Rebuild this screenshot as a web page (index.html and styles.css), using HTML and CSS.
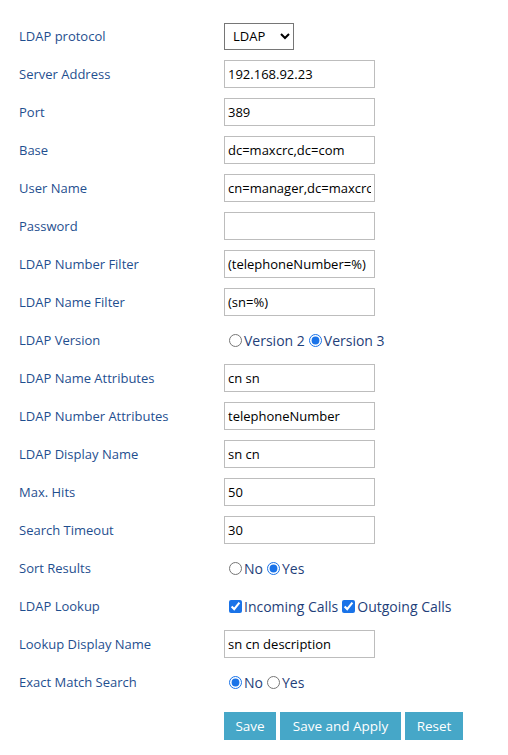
FILE: index.html
```html
<!DOCTYPE html>
<html>
<head>
<meta charset="utf-8">
<link rel="stylesheet" href="styles.css">
</head>
<body>
<form class="form">
  <div class="row"><label class="lbl">LDAP protocol</label><div class="ctl"><select class="sel"><option>LDAP</option></select></div></div>
  <div class="row"><label class="lbl">Server Address</label><div class="ctl"><input class="txt" value="192.168.92.23"></div></div>
  <div class="row"><label class="lbl">Port</label><div class="ctl"><input class="txt" value="389"></div></div>
  <div class="row"><label class="lbl">Base</label><div class="ctl"><input class="txt" value="dc=maxcrc,dc=com"></div></div>
  <div class="row"><label class="lbl">User Name</label><div class="ctl"><input class="txt" value="cn=manager,dc=maxcrc"></div></div>
  <div class="row"><label class="lbl">Password</label><div class="ctl"><input class="txt" type="password" value=""></div></div>
  <div class="row"><label class="lbl">LDAP Number Filter</label><div class="ctl"><input class="txt" value="(telephoneNumber=%)"></div></div>
  <div class="row"><label class="lbl">LDAP Name Filter</label><div class="ctl"><input class="txt" value="(sn=%)"></div></div>
  <div class="row"><label class="lbl">LDAP Version</label><div class="ctl opts"><label class="opt"><input type="radio" name="v">Version 2</label><label class="opt"><input type="radio" name="v" checked>Version 3</label></div></div>
  <div class="row"><label class="lbl">LDAP Name Attributes</label><div class="ctl"><input class="txt" value="cn sn"></div></div>
  <div class="row"><label class="lbl">LDAP Number Attributes</label><div class="ctl"><input class="txt" value="telephoneNumber"></div></div>
  <div class="row"><label class="lbl">LDAP Display Name</label><div class="ctl"><input class="txt" value="sn cn"></div></div>
  <div class="row"><label class="lbl">Max. Hits</label><div class="ctl"><input class="txt" value="50"></div></div>
  <div class="row"><label class="lbl">Search Timeout</label><div class="ctl"><input class="txt" value="30"></div></div>
  <div class="row"><label class="lbl">Sort Results</label><div class="ctl opts"><label class="opt"><input type="radio" name="s">No</label><label class="opt"><input type="radio" name="s" checked>Yes</label></div></div>
  <div class="row"><label class="lbl">LDAP Lookup</label><div class="ctl opts"><label class="opt"><input type="checkbox" checked>Incoming Calls</label><label class="opt"><input type="checkbox" checked>Outgoing Calls</label></div></div>
  <div class="row"><label class="lbl">Lookup Display Name</label><div class="ctl"><input class="txt" value="sn cn description"></div></div>
  <div class="row"><label class="lbl">Exact Match Search</label><div class="ctl opts"><label class="opt"><input type="radio" name="e" checked>No</label><label class="opt"><input type="radio" name="e">Yes</label></div></div>
  <div class="btns">
    <button type="button" class="btn btn-save">Save</button>
    <button type="button" class="btn btn-apply">Save and Apply</button>
    <button type="button" class="btn btn-reset">Reset</button>
  </div>
</form>
</body>
</html>
```
FILE: styles.css
```css
html, body {
  margin: 0;
  padding: 0;
  background: #fff;
}
body {
  font-family: "Open Sans", "Noto Sans", "Liberation Sans", sans-serif;
  font-size: 13px;
}
.form {
  padding: 17px 0 0 19px;
}
.row {
  display: flex;
  align-items: center;
  height: 38px;
}
.lbl {
  width: 205px;
  color: #1f4f8f;
  font-size: 13px;
}
.ctl {
  display: flex;
  align-items: center;
}
.sel {
  width: 70px;
  height: 27px;
  border: 1px solid #767676;
  border-radius: 0;
  background: #fff;
  font-family: inherit;
  font-size: 13px;
  color: #000;
  padding: 0 0 0 4px;
}
.txt {
  box-sizing: border-box;
  width: 151px;
  height: 28px;
  border: 1px solid #bdbdbd;
  border-radius: 0;
  padding: 0 3px;
  font-family: inherit;
  font-size: 13px;
  color: #000;
  outline: none;
}
.opts {
  color: #1f3f7a;
  font-size: 14px;
  padding-left: 5px;
  padding-top: 1px;
}
.opt {
  display: inline-flex;
  align-items: center;
  margin-right: 4px;
}
.opt input {
  margin: 0 2px 0 0;
  width: 13px;
  height: 13px;
  accent-color: #1a73e8;
}
.btns {
  display: flex;
  gap: 4px;
  padding-left: 205px;
  margin-top: 11px;
}
.btn {
  height: 28px;
  border: none;
  background: #46a7c8;
  color: #fff;
  font-family: inherit;
  font-size: 13.5px;
  padding: 0;
}
.btn-save { width: 52px; }
.btn-apply { width: 121px; }
.btn-reset { width: 58px; }
```
